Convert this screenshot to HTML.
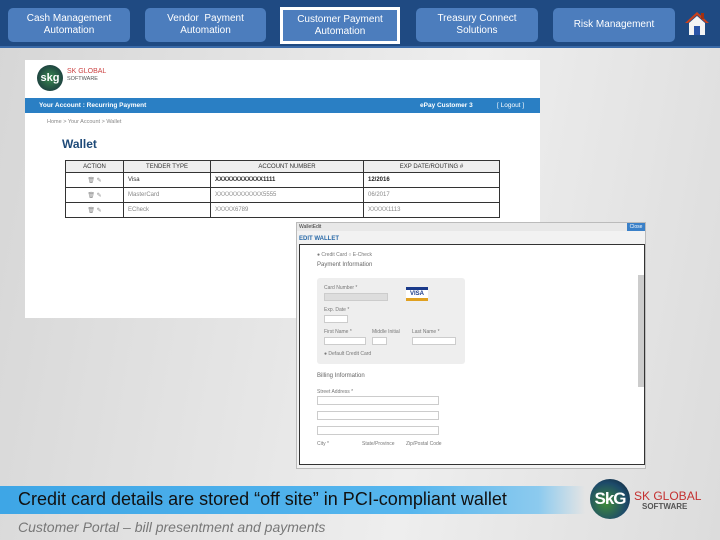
<!DOCTYPE html>
<html><head><meta charset="utf-8"><style>
*{margin:0;padding:0;box-sizing:border-box}
body{width:720px;height:540px;overflow:hidden;position:relative;font-family:"Liberation Sans",sans-serif;background:linear-gradient(100deg,#d6d6d6 0%,#e6e6e6 40%,#eeeeee 60%,#dcdcdc 100%)}
.a{position:absolute}
.nav{left:0;top:0;width:720px;height:48px;background:#1f4a82;border-bottom:2px solid #3a6aa8}
.btn{position:absolute;top:8px;height:34px;background:#4c7dbd;border-radius:5px;color:#fff;font-size:10px;text-align:center;display:flex;align-items:center;justify-content:center;line-height:12px}
.sel{border:3px solid #fff;border-radius:0;background:#4c7dbd}
.shot{left:25px;top:60px;width:515px;height:258px;background:#fff}
table{border-collapse:collapse;font-size:6px;color:#888}
td,th{border:1px solid #333;height:15px;padding:0 4px;text-align:left}
th{background:#eee;text-align:center;height:12px;color:#333;font-weight:normal}
.modal{left:296px;top:222px;width:350px;height:247px;background:#f2f2f2;border:1px solid #bbb}
.in{position:absolute;background:#fff;border:1px solid #ccc}
.lbl{position:absolute;font-size:5px;color:#777}
</style></head><body>
<div class="a nav">
<div class="btn" style="left:8px;width:122px">Cash Management<br>Automation</div>
<div class="btn" style="left:145px;width:121px">Vendor&nbsp; Payment<br>Automation</div>
<div class="btn sel" style="left:280px;width:120px;top:7px;height:37px">Customer Payment<br>Automation</div>
<div class="btn" style="left:416px;width:122px">Treasury Connect<br>Solutions</div>
<div class="btn" style="left:553px;width:122px">Risk Management</div>
<svg class="a" style="left:684px;top:10px" width="26" height="26" viewBox="0 0 26 26"><path d="M13 2 L1 13 L4 13 L13 5 L22 13 L25 13Z" fill="#c8401c"/><rect x="17" y="3" width="3" height="6" fill="#a03010"/><path d="M5 13 L13 6 L21 13 L21 25 L5 25Z" fill="#f4f4f4"/><rect x="10" y="16" width="6" height="9" fill="#2b55a8"/></svg>
</div>
<div class="a shot">
<div class="a" style="left:12px;top:5px;width:26px;height:26px;border-radius:50%;background:radial-gradient(#3a8a50,#14283a);color:#fff;font-size:11px;font-weight:bold;line-height:26px;text-align:center">skg</div>
<div class="a" style="left:42px;top:8px;font-size:7px;color:#c44;line-height:7px">SK GLOBAL<br><span style="color:#555;font-size:5.5px">SOFTWARE</span></div>
<div class="a" style="left:0;top:38px;width:515px;height:15px;background:#2a7fc4;color:#fff;font-size:6.5px;font-weight:bold;line-height:15px;padding-left:14px">Your Account : Recurring Payment<span style="position:absolute;left:395px">ePay Customer 3</span><span style="position:absolute;left:472px;font-weight:normal">[ Logout ]</span></div>
<div class="a" style="left:22px;top:59px;font-size:5.5px;color:#888">Home &gt; Your Account &gt; Wallet</div>
<div class="a" style="left:37px;top:77px;font-size:12px;font-weight:bold;color:#1e4a78">Wallet</div>
<table class="a" style="left:40px;top:100px;width:435px">
<tr><th style="width:58px">ACTION</th><th style="width:87px">TENDER TYPE</th><th style="width:153px">ACCOUNT NUMBER</th><th>EXP DATE/ROUTING #</th></tr>
<tr><td style="text-align:center">🗑 ✎</td><td style="color:#333">Visa</td><td style="color:#222;font-weight:bold">XXXXXXXXXXXX1111</td><td style="color:#222;font-weight:bold">12/2016</td></tr>
<tr><td style="text-align:center">🗑 ✎</td><td>MasterCard</td><td>XXXXXXXXXXXX5555</td><td>06/2017</td></tr>
<tr><td style="text-align:center">🗑 ✎</td><td>ECheck</td><td>XXXXX6789</td><td>XXXXX1113</td></tr>
</table>
</div>
<div class="a modal">
<div class="a" style="left:0;top:0;width:348px;height:8px;background:#e8e8e8;font-size:5px;color:#333;padding-left:2px;line-height:8px">WalletEdit</div>
<div class="a" style="right:0;top:0;width:18px;height:8px;background:#3a80c8;color:#fff;font-size:5px;line-height:8px;text-align:center">Close</div>
<div class="a" style="left:2px;top:13px;font-size:6px;font-weight:bold;color:#2a6aa8">EDIT WALLET</div>
<div class="a" style="left:2px;top:21px;width:346px;height:221px;background:#fff;border:1px solid #333">
<div class="lbl" style="left:17px;top:7px">● Credit Card ○ E-Check</div>
<div class="a" style="left:17px;top:17px;font-size:6px;color:#666">Payment Information</div>
<div class="a" style="left:17px;top:33px;width:148px;height:86px;background:#eee;border-radius:3px"></div>
<div class="lbl" style="left:24px;top:40px">Card Number *</div>
<div class="in" style="left:24px;top:48px;width:64px;height:8px;background:#ddd"></div>
<div class="a" style="left:106px;top:42px;width:22px;height:14px;background:#fff;border-top:3px solid #1a3a8a;border-bottom:3px solid #e0a020;font-size:6px;font-weight:bold;color:#1a3a8a;text-align:center;line-height:8px">VISA</div>
<div class="lbl" style="left:24px;top:62px">Exp. Date *</div>
<div class="in" style="left:24px;top:70px;width:24px;height:8px"></div>
<div class="lbl" style="left:24px;top:84px">First Name *</div><div class="lbl" style="left:72px;top:84px">Middle Initial</div><div class="lbl" style="left:112px;top:84px">Last Name *</div>
<div class="in" style="left:24px;top:92px;width:42px;height:8px"></div><div class="in" style="left:72px;top:92px;width:15px;height:8px"></div><div class="in" style="left:112px;top:92px;width:44px;height:8px"></div>
<div class="lbl" style="left:24px;top:106px">● Default Credit Card</div>
<div class="a" style="left:17px;top:128px;font-size:6px;color:#666">Billing Information</div>
<div class="lbl" style="left:17px;top:144px">Street Address *</div>
<div class="in" style="left:17px;top:151px;width:122px;height:9px"></div>
<div class="in" style="left:17px;top:166px;width:122px;height:9px"></div>
<div class="in" style="left:17px;top:181px;width:122px;height:9px"></div>
<div class="lbl" style="left:17px;top:196px">City *</div><div class="lbl" style="left:62px;top:196px">State/Province</div><div class="lbl" style="left:106px;top:196px">Zip/Postal Code</div>
<div class="a" style="left:338px;top:30px;width:6px;height:112px;background:#ccc"></div>
</div>
</div>
<div class="a" style="left:0;top:486px;width:585px;height:28px;background:linear-gradient(90deg,#3ea6e6,#56b6ee 70%,#8ccaee 92%,rgba(200,220,235,0))"></div>
<div class="a" style="left:18px;top:489px;font-size:18px;color:#111;white-space:nowrap">Credit card details are stored “off site” in PCI-compliant wallet</div>
<div class="a" style="left:18px;top:519px;font-size:14px;color:#777;font-style:italic;white-space:nowrap">Customer Portal – bill presentment and payments</div>
<div class="a" style="left:590px;top:479px;width:40px;height:40px;border-radius:50%;background:radial-gradient(circle at 40% 60%,#3f8c3a,#1d4a6a 60%,#0c1a28);color:#fff;font-size:17px;font-weight:bold;line-height:40px;text-align:center;letter-spacing:-1px">SkG</div>
<div class="a" style="left:634px;top:490px;font-size:12px;color:#c43030;line-height:12px;white-space:nowrap">SK GLOBAL</div>
<div class="a" style="left:642px;top:502px;font-size:8px;font-weight:bold;color:#555;white-space:nowrap">SOFTWARE</div>
</body></html>
